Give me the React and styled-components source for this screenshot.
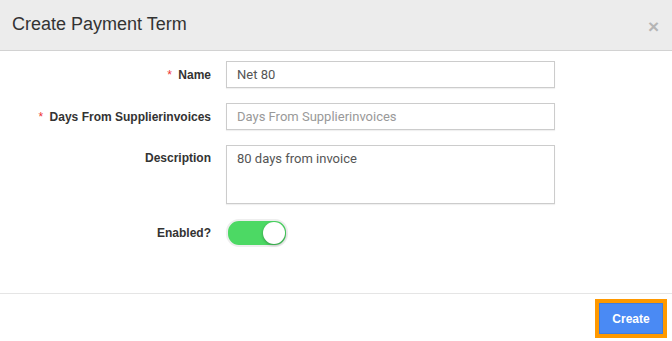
import styled, { createGlobalStyle } from "styled-components";
import { useState } from "react";

const GlobalStyle = createGlobalStyle`
  body {
    margin: 0;
    background: #fff;
    font-family: "Liberation Sans", Arial, sans-serif;
  }
`;

const App = () => {
  const [enabled, setEnabled] = useState(true);

  return (
    <>
      <GlobalStyle />
      <Modal>
        <Header>
          <Title>Create Payment Term</Title>
          <Close>×</Close>
        </Header>
        <Body>
          <Row>
            <Label required>Name</Label>
            <Input defaultValue="Net 80" />
          </Row>
          <Row>
            <Label required>Days From Supplierinvoices</Label>
            <Input placeholder="Days From Supplierinvoices" />
          </Row>
          <Row>
            <Label top>Description</Label>
            <TextArea defaultValue="80 days from invoice" />
          </Row>
          <Row>
            <Label>Enabled?</Label>
            <Switch on={enabled} onClick={() => setEnabled(!enabled)}>
              <Knob on={enabled} />
            </Switch>
          </Row>
        </Body>
        <Footer>
          <Button>Create</Button>
        </Footer>
      </Modal>
    </>
  );
};

const Modal = styled.div`
  width: 672px;
  height: 341px;
  background: #fff;
  display: flex;
  flex-direction: column;
`;

const Header = styled.div`
  height: 51px;
  background: #ececec;
  border-bottom: 1px solid #d2d2d2;
  display: flex;
  align-items: center;
  justify-content: space-between;
  padding: 0 13px 0 12px;
  box-sizing: border-box;
`;

const Title = styled.h4`
  margin: 0 0 2px;
  font-size: 18px;
  font-weight: normal;
  color: #333;
`;

const Close = styled.span`
  font-size: 19px;
  font-weight: bold;
  color: #b5b5b5;
  margin-top: 3px;
`;

const Body = styled.div`
  padding: 10px 0 0;
  height: 242px;
  box-sizing: border-box;
`;

const Row = styled.div`
  display: grid;
  grid-template-columns: 211px 329px;
  column-gap: 15px;
  align-items: center;
  margin-bottom: 15px;

  &:last-child {
    margin-top: 14px;
  }
`;

const Label = styled.label`
  justify-self: end;
  align-self: ${(p) => (p.top ? "start" : "center")};
  padding-top: ${(p) => (p.top ? "6px" : "0")};
  font-size: 12px;
  font-weight: bold;
  color: #333;

  &::before {
    content: ${(p) => (p.required ? '"* "' : '""')};
    color: #e33;
    font-weight: normal;
    margin-right: 3px;
  }
`;

const Input = styled.input`
  height: 27px;
  box-sizing: border-box;
  border: 1px solid #ccc;
  box-shadow: 0 1px 1px rgba(0, 0, 0, 0.06);
  padding: 0 10px;
  font-family: Roboto, "Liberation Sans", sans-serif;
  font-size: 13px;
  color: #555;
  outline: none;

  &::placeholder {
    color: #999;
  }
`;

const TextArea = styled.textarea`
  height: 59px;
  box-sizing: border-box;
  border: 1px solid #ccc;
  box-shadow: 0 1px 1px rgba(0, 0, 0, 0.06);
  padding: 5px 10px;
  font-family: Roboto, "Liberation Sans", sans-serif;
  font-size: 13px;
  color: #555;
  resize: none;
  outline: none;
`;

const Switch = styled.div`
  width: 58px;
  height: 24px;
  border-radius: 13px;
  background: ${(p) => (p.on ? "#4cd964" : "#dcdcdc")};
  border: 2px solid #eee;
  position: relative;
  cursor: pointer;
`;

const Knob = styled.div`
  position: absolute;
  top: 1px;
  left: ${(p) => (p.on ? "35px" : "1px")};
  width: 22px;
  height: 22px;
  border-radius: 50%;
  background: #fff;
  box-shadow: 0 1px 3px rgba(0, 0, 0, 0.35);
`;

const Footer = styled.div`
  flex: 1;
  border-top: 1px solid #e5e5e5;
  display: flex;
  justify-content: flex-end;
  align-items: flex-start;
  padding: 9px 9px 0 0;
`;

const Button = styled.button`
  width: 64px;
  height: 31px;
  background: #4a8af4;
  border: 1px solid #3f7de0;
  outline: 4px solid #ff9900;
  color: #fff;
  font-family: "Liberation Sans", Arial, sans-serif;
  font-size: 12px;
  font-weight: bold;
  cursor: pointer;
`;

export default App;
